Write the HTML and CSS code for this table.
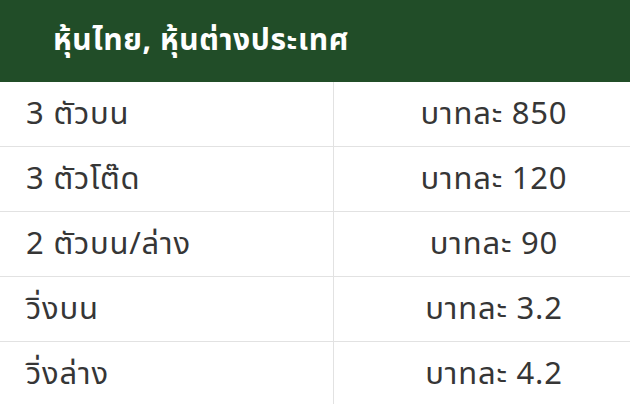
FILE: index.html
```html
<!DOCTYPE html>
<html lang="th">
<head>
<meta charset="utf-8">
<link rel="stylesheet" href="styles.css">
</head>
<body>
<div class="wrap">
<table class="rates">
  <thead>
    <tr><th colspan="2">หุ้นไทย, หุ้นต่างประเทศ</th></tr>
  </thead>
  <tbody>
    <tr><td class="name">3 ตัวบน</td><td class="price">บาทละ 850</td></tr>
    <tr><td class="name">3 ตัวโต๊ด</td><td class="price">บาทละ 120</td></tr>
    <tr><td class="name">2 ตัวบน/ล่าง</td><td class="price">บาทละ 90</td></tr>
    <tr><td class="name">วิ่งบน</td><td class="price">บาทละ 3.2</td></tr>
    <tr><td class="name">วิ่งล่าง</td><td class="price">บาทละ 4.2</td></tr>
  </tbody>
</table>
</div>
</body>
</html>
```
FILE: styles.css
```css
html, body {
  margin: 0;
  padding: 0;
  background: #ffffff;
}
.wrap {
  width: 630px;
  height: 404px;
  overflow: hidden;
}
.rates {
  width: 654px;
  border-collapse: collapse;
  font-family: "Noto Sans", "Noto Sans Thai", "Liberation Sans", sans-serif;
  color: #363636;
}
.rates th {
  height: 82px;
  padding: 0 0 0 53px;
  background: #214d28;
  color: #ffffff;
  font-size: 30px;
  letter-spacing: 0.6px;
  font-weight: 700;
  text-align: left;
}
.rates td {
  height: 64px;
  font-size: 31px;
  letter-spacing: 0.8px;
  border-bottom: 1px solid #e2e2e2;
  padding: 0;
}
.rates .name {
  width: 307px;
  padding-left: 26px;
  border-right: 1px solid #e2e2e2;
}
.rates .price {
  text-align: center;
}
```
